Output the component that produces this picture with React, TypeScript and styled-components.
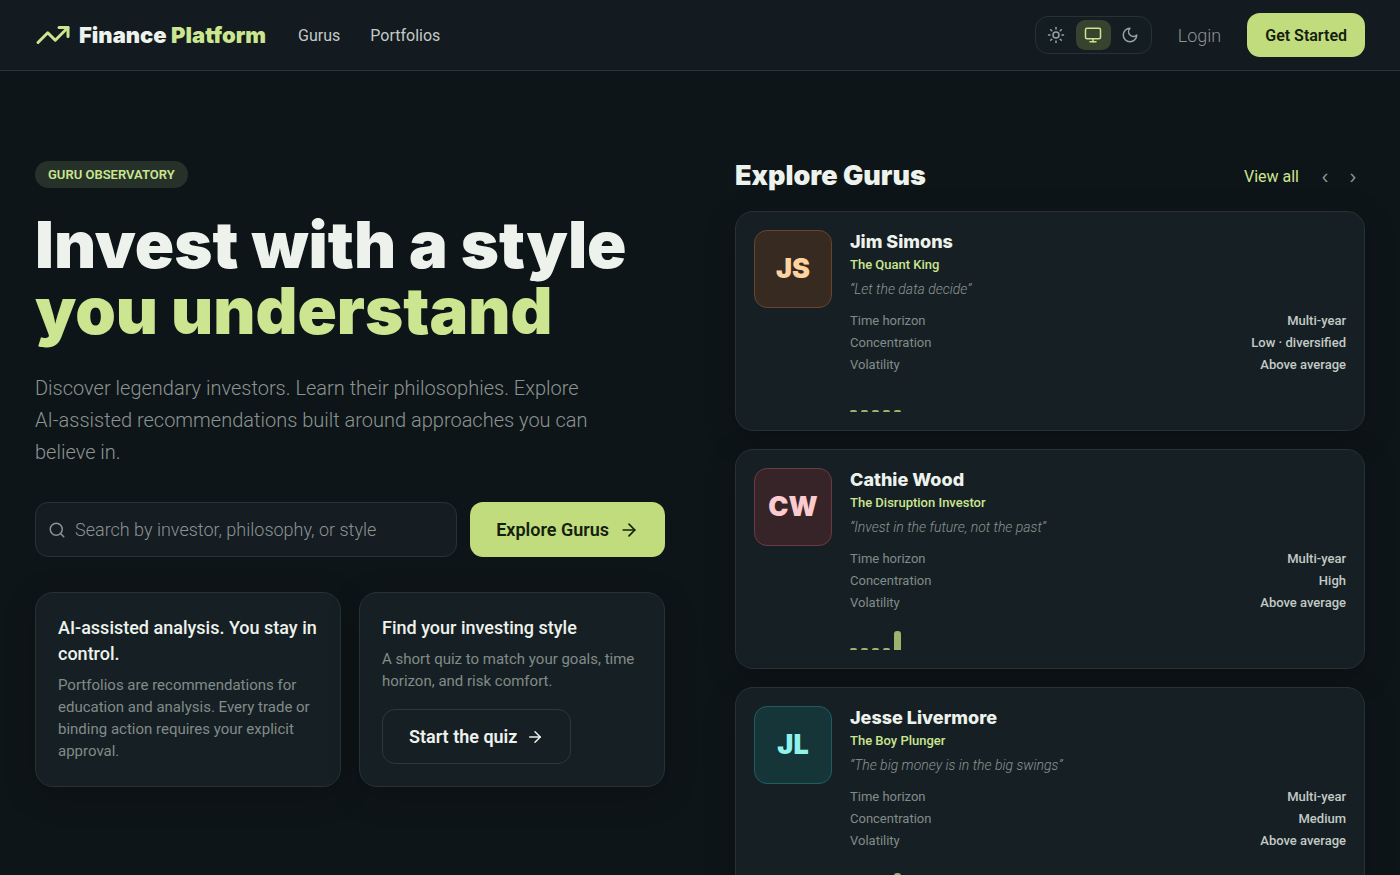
import React from "react";
import styled, { createGlobalStyle, css } from "styled-components";
import { ArrowRight, Monitor, Search, Sun, TrendingUp } from "lucide-react";

const color = {
  page: "#0e1518",
  header: "#131a20",
  card: "#162024",
  field: "#151c22",
  line: "#283235",
  lime: "#c1dc7d",
  limeText: "#cbe590",
  limeInk: "#14200d",
  text: "#edf2ec",
  soft: "#c3cac6",
  muted: "#8b9492",
};

const displayFont = `Inter, "Liberation Sans", sans-serif`;

const GlobalStyle = createGlobalStyle`
  *, *::before, *::after { box-sizing: border-box; }
  body {
    margin: 0;
    background: ${color.page};
    color: ${color.text};
    font-family: Roboto, "Liberation Sans", sans-serif;
    font-size: 16px;
  }
  h1, h2, h3, p, dl, dd, dt, ul { margin: 0; padding: 0; }
  button, input { font: inherit; color: inherit; }
  a { color: inherit; text-decoration: none; }
`;

const Header = styled.header`
  display: flex;
  align-items: center;
  justify-content: space-between;
  height: 71px;
  padding: 0 35px;
  background: ${color.header};
  border-bottom: 1px solid ${color.line};
`;

const Cluster = styled.div`
  display: flex;
  align-items: center;
`;

const Brand = styled.a`
  display: flex;
  align-items: center;
  gap: 8px;
  font-family: ${displayFont};
  font-size: 22px;
  font-weight: 900;
  svg { color: ${color.limeText}; }
`;

const Accent = styled.span`
  color: ${color.limeText};
`;

const Nav = styled.nav`
  display: flex;
  gap: 30px;
  margin-left: 32px;
  font-size: 16px;
  color: ${color.soft};
`;

const ThemeSwitch = styled.div`
  display: flex;
  gap: 2px;
  padding: 3px;
  border: 1px solid ${color.line};
  border-radius: 13px;
  background: #141d21;
`;

const ThemeButton = styled.button<{ $active?: boolean }>`
  display: grid;
  place-items: center;
  width: 35px;
  height: 30px;
  padding: 0;
  border: 0;
  border-radius: 9px;
  background: ${(p) => (p.$active ? "#37432f" : "transparent")};
  color: ${(p) => (p.$active ? color.limeText : "#9aa3a0")};
`;

const Login = styled.a`
  margin: 0 26px;
  font-size: 18px;
  font-weight: 300;
  color: ${color.muted};
`;

const buttonBase = css`
  display: inline-flex;
  align-items: center;
  justify-content: center;
  border-radius: 13px;
  font-weight: 600;
  white-space: nowrap;
`;

const PrimaryButton = styled.button<{ $large?: boolean }>`
  ${buttonBase}
  gap: 10px;
  height: ${(p) => (p.$large ? 55 : 44)}px;
  padding: 0 ${(p) => (p.$large ? 26 : 18)}px;
  border: 0;
  font-size: ${(p) => (p.$large ? 18 : 16)}px;
  background: ${color.lime};
  color: ${color.limeInk};
`;

const OutlineButton = styled.button`
  ${buttonBase}
  gap: 9px;
  height: 55px;
  margin-top: 17px;
  padding: 0 26px;
  border: 1px solid #2c383b;
  font-size: 18px;
  background: transparent;
  color: ${color.text};
`;

const Main = styled.main`
  display: grid;
  grid-template-columns: repeat(2, minmax(0, 1fr));
  align-items: start;
  gap: 70px;
  padding: 90px 35px;
`;

const Badge = styled.span`
  display: inline-flex;
  align-items: center;
  height: 27px;
  padding: 0 13px;
  border-radius: 14px;
  background: #263229;
  color: ${color.limeText};
  font-size: 13px;
  font-weight: 600;
  text-transform: uppercase;
`;

const Headline = styled.h1`
  margin-top: 24px;
  font-family: ${displayFont};
  font-size: 65px;
  line-height: 66px;
  font-weight: 900;
  white-space: nowrap;
  span { display: block; }
`;

const Lead = styled.p`
  max-width: 560px;
  margin-top: 28px;
  font-size: 20px;
  line-height: 32px;
  font-weight: 300;
  color: ${color.muted};
`;

const SearchForm = styled.form`
  display: flex;
  gap: 13px;
  margin-top: 34px;
`;

const SearchField = styled.label`
  display: flex;
  flex: 1;
  align-items: center;
  gap: 9px;
  min-width: 0;
  height: 55px;
  padding: 0 12px;
  border: 1px solid ${color.line};
  border-radius: 13px;
  background: ${color.field};
  color: ${color.muted};
  svg { flex: none; }
`;

const SearchInput = styled.input`
  flex: 1;
  min-width: 0;
  padding: 0;
  border: 0;
  outline: 0;
  background: transparent;
  font-size: 18px;
  font-weight: 300;
  &::placeholder { color: ${color.muted}; opacity: 1; }
`;

const Panels = styled.div`
  display: grid;
  grid-template-columns: repeat(2, minmax(0, 1fr));
  gap: 18px;
  margin-top: 35px;
`;

const panel = css`
  border: 1px solid ${color.line};
  border-radius: 18px;
  background: ${color.card};
  box-shadow: 0 8px 32px rgba(0, 0, 0, 0.22);
`;

const Panel = styled.section`
  ${panel}
  padding: 22px;
`;

const PanelTitle = styled.h2`
  font-size: 18px;
  line-height: 26px;
  font-weight: 500;
`;

const PanelText = styled.p`
  margin-top: 7px;
  font-size: 15px;
  line-height: 22px;
  color: #828b89;
`;

const ListHeader = styled.div`
  display: flex;
  align-items: center;
  justify-content: space-between;
  height: 30px;
  margin-bottom: 20px;
`;

const ListTitle = styled.h2`
  font-family: ${displayFont};
  font-size: 27px;
  line-height: 30px;
  font-weight: 900;
`;

const ViewAll = styled.a`
  margin-right: 14px;
  font-size: 16px;
  color: ${color.limeText};
`;

const Pager = styled.div`
  display: flex;
  gap: 4px;
`;

const PageButton = styled.button`
  width: 24px;
  height: 28px;
  padding: 0;
  border: 0;
  background: transparent;
  font-family: ${displayFont};
  font-size: 18px;
  color: ${color.muted};
`;

const GuruList = styled.div`
  display: flex;
  flex-direction: column;
  gap: 18px;
`;

const GuruCard = styled.article`
  ${panel}
  display: flex;
  gap: 18px;
  padding: 18px;
`;

const Avatar = styled.div<{ $fill: string; $edge: string; $ink: string }>`
  display: grid;
  flex: none;
  place-items: center;
  width: 78px;
  height: 78px;
  border: 1px solid ${(p) => p.$edge};
  border-radius: 13px;
  background: ${(p) => p.$fill};
  color: ${(p) => p.$ink};
  font-family: ${displayFont};
  font-size: 27px;
  line-height: 30px;
  font-weight: 900;
`;

const GuruBody = styled.div`
  flex: 1;
  min-width: 0;
`;

const GuruName = styled.h3`
  font-family: ${displayFont};
  font-size: 18px;
  line-height: 24px;
  font-weight: 800;
`;

const GuruTitle = styled.p`
  font-size: 13px;
  line-height: 22px;
  font-weight: 500;
  color: ${color.limeText};
`;

const Quote = styled.p`
  margin-top: 2px;
  font-size: 14px;
  line-height: 22px;
  font-style: italic;
  font-weight: 300;
  color: ${color.muted};
`;

const Facts = styled.dl`
  margin-top: 10px;
  font-size: 13px;
  line-height: 22px;
`;

const Fact = styled.div`
  display: flex;
  justify-content: space-between;
  dt { color: #828b89; }
  dd { color: ${color.soft}; font-weight: 500; }
`;

const Bars = styled.div`
  display: flex;
  align-items: flex-end;
  gap: 4px;
  height: 20px;
  margin-top: 16px;
`;

const Bar = styled.span`
  width: 7px;
  border-radius: 3px 3px 0 0;
  background: #9bb46d;
`;

const MoonIcon = () => (
  <svg width="18" height="18" viewBox="0 0 24 24" fill="none" stroke="currentColor"
    strokeWidth="2" strokeLinecap="round" strokeLinejoin="round" aria-hidden>
    <path d="M12 3a6 6 0 0 0 9 9 9 9 0 1 1-9-9Z" />
  </svg>
);

const gurus = [
  {
    initials: "JS", name: "Jim Simons", title: "The Quant King", quote: "Let the data decide",
    concentration: "Low · diversified", bars: [2, 2, 2, 2, 2],
    fill: "#372a21", edge: "#6b4429", ink: "#fdd3a0",
  },
  {
    initials: "CW", name: "Cathie Wood", title: "The Disruption Investor", quote: "Invest in the future, not the past",
    concentration: "High", bars: [2, 2, 2, 2, 19],
    fill: "#372428", edge: "#6d3a41", ink: "#fccbcf",
  },
  {
    initials: "JL", name: "Jesse Livermore", title: "The Boy Plunger", quote: "The big money is in the big swings",
    concentration: "Medium", bars: [2, 2, 2, 2, 15],
    fill: "#163539", edge: "#1d5f60", ink: "#8ff3ea",
  },
];

export default function App() {
  return (
    <>
      <GlobalStyle />
      <Header>
        <Cluster>
          <Brand href="#">
            <TrendingUp size={36} />
            <span>Finance <Accent>Platform</Accent></span>
          </Brand>
          <Nav>
            <a href="#gurus">Gurus</a>
            <a href="#portfolios">Portfolios</a>
          </Nav>
        </Cluster>
        <Cluster>
          <ThemeSwitch role="group" aria-label="Theme">
            <ThemeButton aria-label="Light"><Sun size={18} /></ThemeButton>
            <ThemeButton aria-label="System" $active><Monitor size={18} /></ThemeButton>
            <ThemeButton aria-label="Dark"><MoonIcon /></ThemeButton>
          </ThemeSwitch>
          <Login href="#login">Login</Login>
          <PrimaryButton>Get Started</PrimaryButton>
        </Cluster>
      </Header>
      <Main>
        <div>
          <Badge>Guru Observatory</Badge>
          <Headline>
            <span>Invest with a style</span>
            <Accent>you understand</Accent>
          </Headline>
          <Lead>
            Discover legendary investors. Learn their philosophies. Explore AI-assisted
            recommendations built around approaches you can believe in.
          </Lead>
          <SearchForm>
            <SearchField>
              <Search size={18} aria-hidden />
              <SearchInput
                type="text"
                aria-label="Search gurus"
                placeholder="Search by investor, philosophy, or style"
              />
            </SearchField>
            <PrimaryButton type="button" $large>
              Explore Gurus <ArrowRight size={20} />
            </PrimaryButton>
          </SearchForm>
          <Panels>
            <Panel>
              <PanelTitle>AI-assisted analysis. You stay in control.</PanelTitle>
              <PanelText>
                Portfolios are recommendations for education and analysis. Every trade or
                binding action requires your explicit approval.
              </PanelText>
            </Panel>
            <Panel>
              <PanelTitle>Find your investing style</PanelTitle>
              <PanelText>A short quiz to match your goals, time horizon, and risk comfort.</PanelText>
              <OutlineButton>
                Start the quiz <ArrowRight size={18} />
              </OutlineButton>
            </Panel>
          </Panels>
        </div>
        <div>
          <ListHeader>
            <ListTitle>Explore Gurus</ListTitle>
            <Cluster>
              <ViewAll href="#gurus">View all</ViewAll>
              <Pager>
                <PageButton aria-label="Previous">‹</PageButton>
                <PageButton aria-label="Next">›</PageButton>
              </Pager>
            </Cluster>
          </ListHeader>
          <GuruList>
            {gurus.map((g) => (
              <GuruCard key={g.initials}>
                <Avatar $fill={g.fill} $edge={g.edge} $ink={g.ink}>{g.initials}</Avatar>
                <GuruBody>
                  <GuruName>{g.name}</GuruName>
                  <GuruTitle>{g.title}</GuruTitle>
                  <Quote>“{g.quote}”</Quote>
                  <Facts>
                    <Fact><dt>Time horizon</dt><dd>Multi-year</dd></Fact>
                    <Fact><dt>Concentration</dt><dd>{g.concentration}</dd></Fact>
                    <Fact><dt>Volatility</dt><dd>Above average</dd></Fact>
                  </Facts>
                  <Bars aria-hidden>
                    {g.bars.map((h, i) => <Bar key={i} style={{ height: h }} />)}
                  </Bars>
                </GuruBody>
              </GuruCard>
            ))}
          </GuruList>
        </div>
      </Main>
    </>
  );
}
